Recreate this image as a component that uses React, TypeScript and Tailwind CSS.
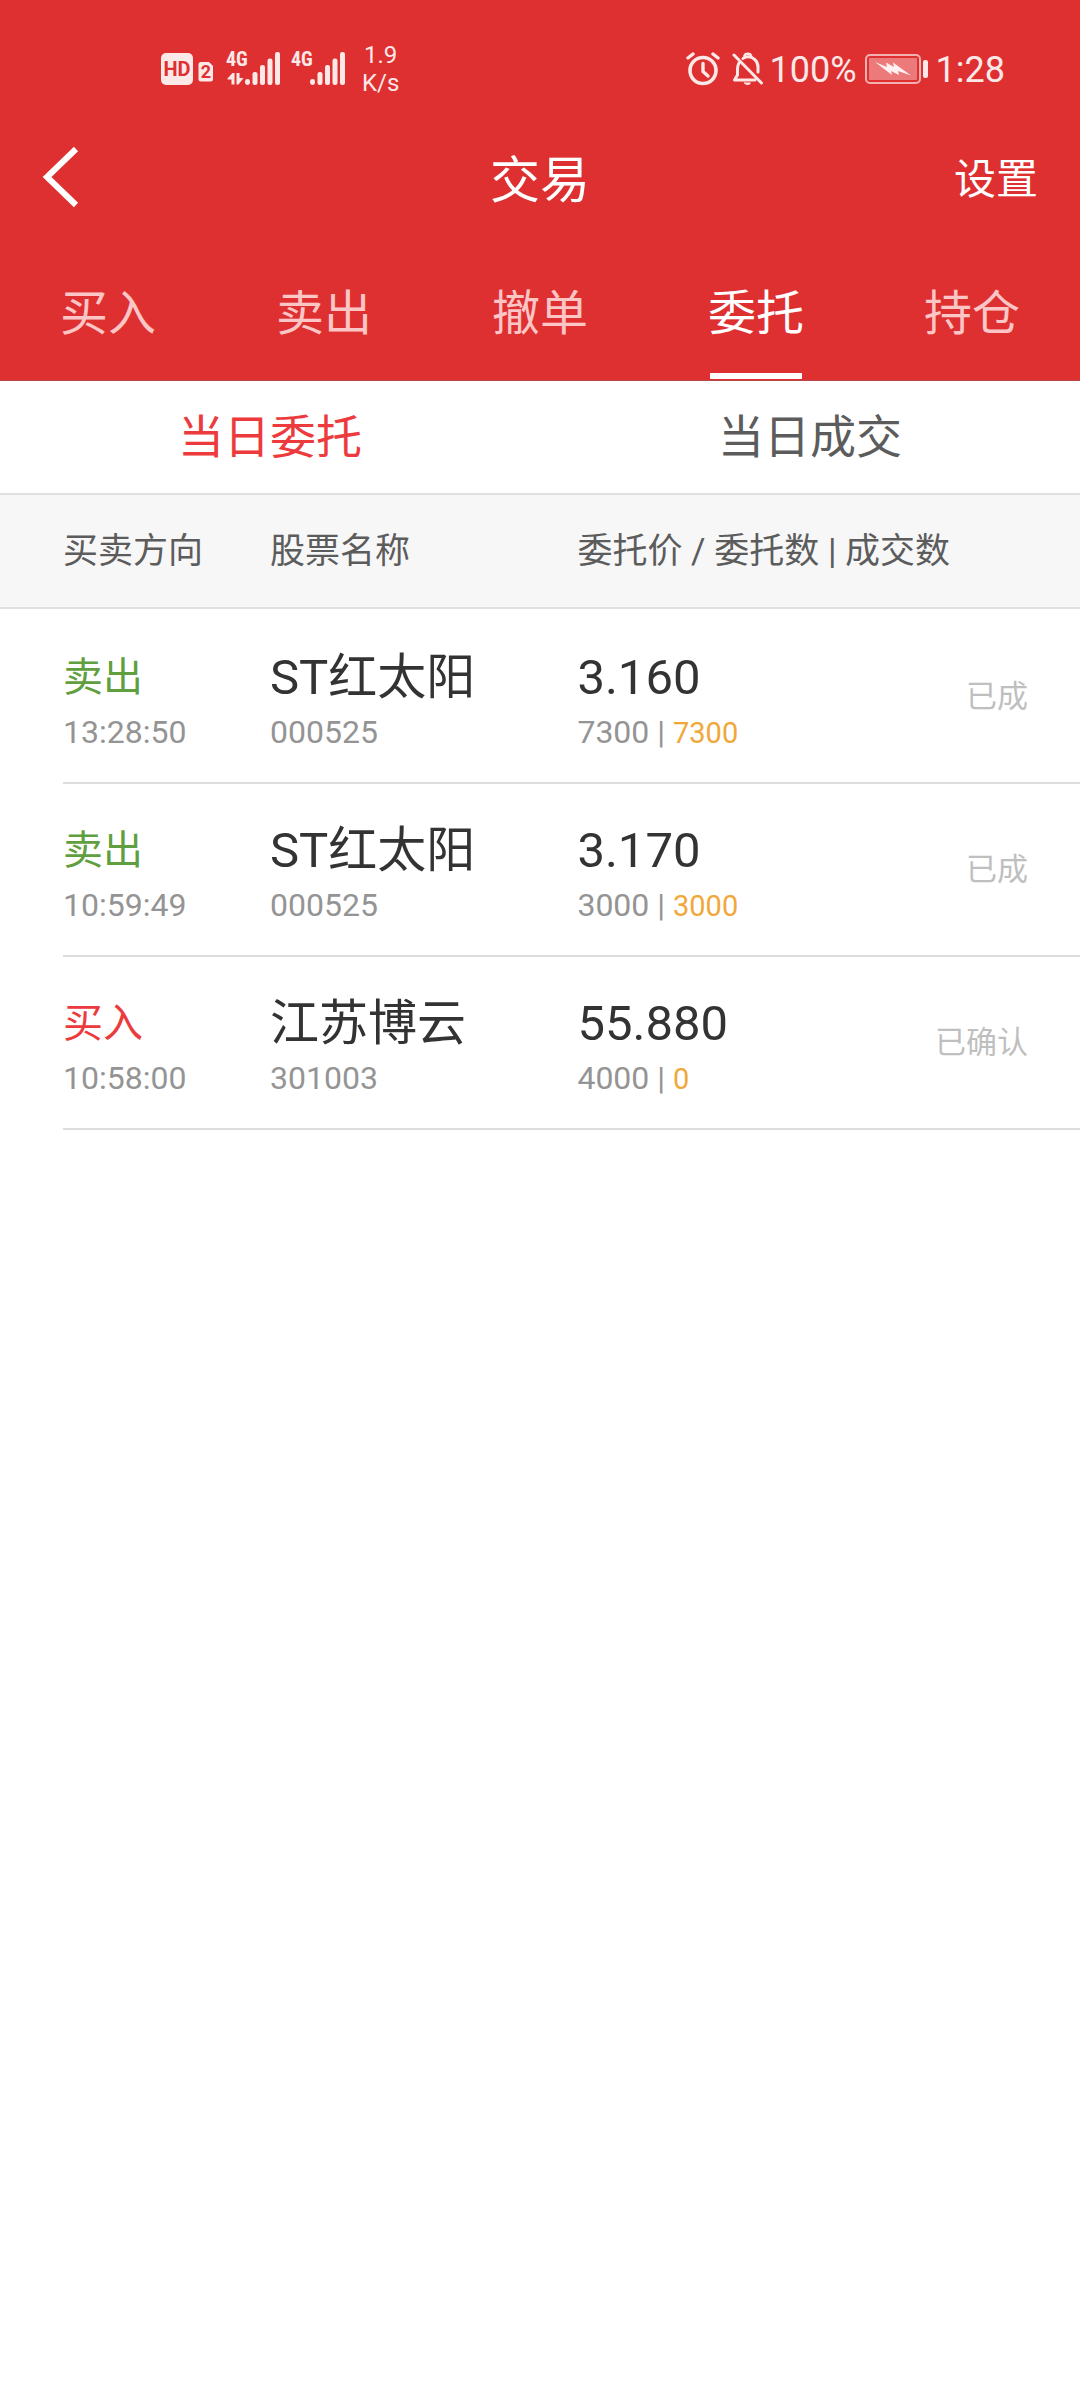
import React, { useState } from "react";

type Order = {
  side: "sell" | "buy";
  time: string;
  name: string;
  code: string;
  price: string;
  amount: string;
  filled: string;
  status: string;
};

const orders: Order[] = [
  { side: "sell", time: "13:28:50", name: "ST红太阳", code: "000525", price: "3.160", amount: "7300", filled: "7300", status: "已成" },
  { side: "sell", time: "10:59:49", name: "ST红太阳", code: "000525", price: "3.170", amount: "3000", filled: "3000", status: "已成" },
  { side: "buy", time: "10:58:00", name: "江苏博云", code: "301003", price: "55.880", amount: "4000", filled: "0", status: "已确认" },
];

const tabs = ["买入", "卖出", "撤单", "委托", "持仓"];
const subTabs = ["当日委托", "当日成交"];

function Signal({ data }: { data: boolean }) {
  return (
    <svg className="overflow-visible" width="54" height="42" viewBox="0 -4 54 42" fill="currentColor" aria-hidden="true">
      <text x="-1" y="14" fontSize="20" fontWeight="700" fontFamily="'Liberation Sans Narrow', 'Roboto Condensed', Roboto, sans-serif">
        4G
      </text>
      {data && (
        <g>
          <path d="M0.5 26.5 L5.5 21 H7.5 V32.5 H4.5 V27.5 H0.5 Z" />
          <path d="M9.5 21 H12.5 V26 H16.5 L11.5 32.5 H9.5 Z" />
        </g>
      )}
      <rect x="18" y="27" width="5" height="6" rx="2.4" />
      <rect x="25.5" y="20" width="5" height="13" rx="2.2" />
      <rect x="33" y="13" width="5" height="20" rx="2.2" />
      <rect x="40.5" y="6.5" width="5" height="26.5" rx="2.2" />
      <rect x="48" y="0" width="5" height="33" rx="2.2" />
    </svg>
  );
}

function StatusBar() {
  return (
    <div className="flex h-[136px] items-center justify-between pt-0.5 pr-[75px] pl-[161px] text-[#fde8e8]">
      <div className="flex items-center">
        <svg width="53" height="34" viewBox="0 0 53 34" aria-hidden="true">
          <rect x="0" y="1" width="32" height="32" rx="5" fill="currentColor" />
          <text x="16" y="24" textAnchor="middle" fontSize="20" fontWeight="700" fontFamily="Roboto, sans-serif" fill="#de3031">
            HD
          </text>
          <path d="M40 10 H48 L52 14 V27 a2.5 2.5 0 0 1 -2.5 2.5 H40 a2.5 2.5 0 0 1 -2.5 -2.5 V12.5 A2.5 2.5 0 0 1 40 10 Z" fill="currentColor" />
          <text x="45" y="26" textAnchor="middle" fontSize="18" fontWeight="700" fontFamily="Roboto, sans-serif" fill="#de3031">
            2
          </text>
        </svg>
        <div className="ml-[13px] flex items-center gap-[11px]">
          <Signal data />
          <Signal data={false} />
        </div>
        <div className="ml-4 text-center text-[24px] leading-7">
          <p>1.9</p>
          <p>K/s</p>
        </div>
      </div>
      <div className="flex items-center text-[36px] leading-10">
        <svg width="34" height="34" viewBox="0 0 34 34" fill="none" stroke="currentColor" strokeLinecap="round" aria-hidden="true">
          <circle cx="17" cy="18.5" r="13" strokeWidth="3.6" />
          <path d="M17 11.5 V19.5 L22 24" strokeWidth="3.4" />
          <path d="M2 6 L7 2 M32 6 L27 2" strokeWidth="3.4" />
        </svg>
        <svg className="ml-3" width="32" height="34" viewBox="0 0 32 34" fill="none" stroke="currentColor" strokeLinecap="round" strokeLinejoin="round" aria-hidden="true">
          <path d="M2 3 L29.5 31" strokeWidth="3" />
          <path d="M7 11 C5.8 13 5.5 14.5 5.5 17 V23 L2.5 28 H23" strokeWidth="3" />
          <path d="M11 6.5 C12 5.6 13 5.2 14 5 C21 3.8 26 9 26 15 V20" strokeWidth="3" />
          <path d="M12.5 4 C13 1 18.5 1 19 4" strokeWidth="2.6" />
          <path d="M12.5 31 H18.5 C17.5 33 13.5 33 12.5 31 Z" fill="currentColor" strokeWidth="1" />
        </svg>
        <span className="ml-1.5 pt-0.5">100%</span>
        <svg className="ml-2" width="63" height="30" viewBox="0 0 63 30" aria-hidden="true">
          <rect x="1" y="1" width="54" height="28" rx="4" fill="none" stroke="#f4b0b0" strokeWidth="2" />
          <rect x="4" y="4" width="48" height="22" rx="1" fill="#ec7a7b" />
          <path d="M10 8 L22 13 L21 8.5 L29 13 L28 8.5 L46 21.5 L33 17 L34 21 L26 17 L27 21 Z" fill="#fff1f1" />
          <rect x="58" y="6" width="5" height="18" rx="2" fill="#fde8e8" />
        </svg>
        <span className="ml-2 pt-0.5">1:28</span>
      </div>
    </div>
  );
}

export default function App() {
  const [tab, setTab] = useState("委托");
  const [subTab, setSubTab] = useState("当日委托");

  return (
    <div className="min-h-screen bg-white font-[Roboto,'Noto_Sans_CJK_SC',sans-serif] text-[#333333]">
      <header className="border-b border-[#b9474a] bg-[#de3031] pb-px text-white">
        <StatusBar />
        <div className="grid h-[90px] grid-cols-3 items-center px-[42px]">
          <button type="button" aria-label="返回" className="justify-self-start pb-2">
            <svg width="37" height="62" viewBox="0 0 37 62" fill="none" stroke="currentColor" strokeWidth="6">
              <path d="M34 3 L5 31 L34 59" />
            </svg>
          </button>
          <h1 className="text-center text-[50px] leading-14">交易</h1>
          <button type="button" className="justify-self-end pb-0.5 text-[42px] leading-14">
            设置
          </button>
        </div>
        <nav className="grid grid-cols-5">
          {tabs.map((t) => (
            <button
              key={t}
              type="button"
              onClick={() => setTab(t)}
              className={`flex flex-col items-center pt-[60px] text-[48px] leading-14 ${t === tab ? "text-white" : "text-[#fcc5c6]"}`}
            >
              {t}
              <span className={`mt-[31px] h-1.5 w-[92px] ${t === tab ? "bg-white" : ""}`} />
            </button>
          ))}
        </nav>
      </header>

      <div className="grid grid-cols-2 border-b-2 border-[#dfe0e0]">
        {subTabs.map((t) => (
          <button
            key={t}
            type="button"
            onClick={() => setSubTab(t)}
            className={`h-28 text-[46px] leading-14 ${t === subTab ? "text-[#ed3a3d]" : "text-[#5c5c5c]"}`}
          >
            {t}
          </button>
        ))}
      </div>

      <table className="w-full table-fixed border-separate border-spacing-0 text-left">
        <colgroup>
          <col className="w-1/4" />
          <col className="w-[28%]" />
          <col />
          <col className="w-1/5" />
        </colgroup>
        <thead className="bg-[#f7f7f7] text-[35px] leading-10 text-[#5c5c5c] [&_th]:border-b-2 [&_th]:border-[#dfe0e0] [&_th]:pt-0.5 [&_th]:font-normal">
          <tr>
            <th scope="col" className="h-[114px] pl-[63px]">买卖方向</th>
            <th scope="col">股票名称</th>
            <th scope="col" colSpan={2} className="pl-[5px]">委托价 / 委托数 | 成交数</th>
          </tr>
        </thead>
        <tbody className="[&>tr:first-child>td]:pt-0.5">
          {orders.map((o) => (
            <tr key={o.time}>
              <td className="pl-[63px]">
                <div className="h-[173px] border-b-2 border-[#dcdddd] pt-[39px]">
                  <p className={`text-[40px] leading-14 ${o.side === "sell" ? "text-[#5f9f40]" : "text-[#ec3a3d]"}`}>
                    {o.side === "sell" ? "卖出" : "买入"}
                  </p>
                  <p className="mt-1.5 text-[32px] leading-10 text-[#949494]">{o.time}</p>
                </div>
              </td>
              <td>
                <div className="h-[173px] border-b-2 border-[#dcdddd] pt-[39px]">
                  <p className="text-[49px] leading-14">{o.name}</p>
                  <p className="mt-1.5 text-[32px] leading-10 text-[#949494]">{o.code}</p>
                </div>
              </td>
              <td>
                <div className="h-[173px] border-b-2 border-[#dcdddd] pt-[39px] pl-[5px]">
                  <p className="text-[49px] leading-14">{o.price}</p>
                  <p className="mt-1.5 text-[32px] leading-10 text-[#949494]">
                    {o.amount} | <span className="text-[29px] text-[#f0a83a]">{o.filled}</span>
                  </p>
                </div>
              </td>
              <td>
                <div className="flex h-[173px] items-center justify-end border-b-2 border-[#dcdddd] pr-[52px] text-[31px] leading-10 text-[#bfbfbf]">
                  {o.status}
                </div>
              </td>
            </tr>
          ))}
        </tbody>
      </table>
    </div>
  );
}
